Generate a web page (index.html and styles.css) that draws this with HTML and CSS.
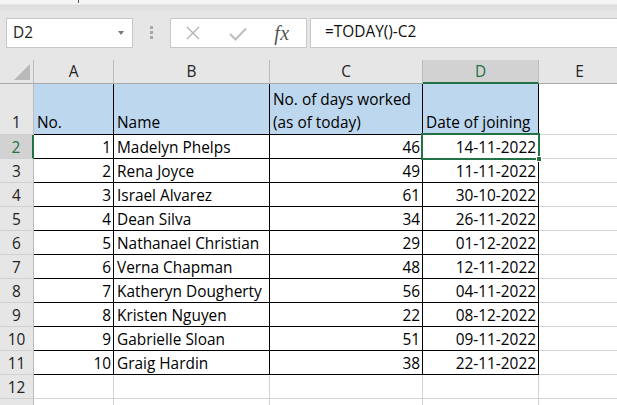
FILE: index.html
```html
<!DOCTYPE html>
<html lang="en">
<head>
  <meta charset="UTF-8">
  <title>Employees - days worked</title>
  <link rel="stylesheet" href="styles.css">
</head>
<body>

<div class="ribbon-edge"><span class="tick"></span></div>

<div class="formula-bar">
  <div class="name-box">
    <span>D2</span>
    <span class="caret"></span>
  </div>
  <div class="grip">
    <i></i><i></i><i></i>
  </div>
  <div class="fx-buttons">
    <span class="slot slot-x">
      <svg width="14" height="14" viewBox="0 0 14 14"><path d="M1 1 L13 13 M13 1 L1 13" stroke="#b4b4b4" stroke-width="1.4" fill="none"/></svg>
    </span>
    <span class="slot slot-ok">
      <svg width="18" height="14" viewBox="0 0 18 14"><path d="M1 7 L6.5 12.5 L17 1.5" stroke="#bdbdbd" stroke-width="2" fill="none"/></svg>
    </span>
    <span class="slot slot-fx">fx</span>
  </div>
  <div class="formula-input">=TODAY()-C2</div>
</div>

<div class="sheet">
  <!-- column headers -->
  <div class="corner">
    <svg width="16" height="16" viewBox="0 0 16 16"><path d="M16 0 L16 16 L0 16 Z" fill="#b9b9b9"/></svg>
  </div>
  <div class="col-head">A</div>
  <div class="col-head">B</div>
  <div class="col-head">C</div>
  <div class="col-head selected">D</div>
  <div class="col-head">E</div>

  <!-- row 1 -->
  <div class="row-head tall">1</div>
  <div class="cell tbl fill tall">No.</div>
  <div class="cell tbl fill tall">Name</div>
  <div class="cell tbl fill tall">No. of days worked<br>(as of today)</div>
  <div class="cell tbl fill tall">Date of joining</div>
  <div class="cell"></div>

  <div class="row-head selected">2</div>
  <div class="cell tbl num">1</div>
  <div class="cell tbl">Madelyn Phelps</div>
  <div class="cell tbl num">46</div>
  <div class="cell tbl num active">14-11-2022<span class="cursor"><span class="handle"></span></span></div>
  <div class="cell"></div>

  <div class="row-head">3</div>
  <div class="cell tbl num">2</div>
  <div class="cell tbl">Rena Joyce</div>
  <div class="cell tbl num">49</div>
  <div class="cell tbl num">11-11-2022</div>
  <div class="cell"></div>

  <div class="row-head">4</div>
  <div class="cell tbl num">3</div>
  <div class="cell tbl">Israel Alvarez</div>
  <div class="cell tbl num">61</div>
  <div class="cell tbl num">30-10-2022</div>
  <div class="cell"></div>

  <div class="row-head">5</div>
  <div class="cell tbl num">4</div>
  <div class="cell tbl">Dean Silva</div>
  <div class="cell tbl num">34</div>
  <div class="cell tbl num">26-11-2022</div>
  <div class="cell"></div>

  <div class="row-head">6</div>
  <div class="cell tbl num">5</div>
  <div class="cell tbl">Nathanael Christian</div>
  <div class="cell tbl num">29</div>
  <div class="cell tbl num">01-12-2022</div>
  <div class="cell"></div>

  <div class="row-head">7</div>
  <div class="cell tbl num">6</div>
  <div class="cell tbl">Verna Chapman</div>
  <div class="cell tbl num">48</div>
  <div class="cell tbl num">12-11-2022</div>
  <div class="cell"></div>

  <div class="row-head">8</div>
  <div class="cell tbl num">7</div>
  <div class="cell tbl">Katheryn Dougherty</div>
  <div class="cell tbl num">56</div>
  <div class="cell tbl num">04-11-2022</div>
  <div class="cell"></div>

  <div class="row-head">9</div>
  <div class="cell tbl num">8</div>
  <div class="cell tbl">Kristen Nguyen</div>
  <div class="cell tbl num">22</div>
  <div class="cell tbl num">08-12-2022</div>
  <div class="cell"></div>

  <div class="row-head">10</div>
  <div class="cell tbl num">9</div>
  <div class="cell tbl">Gabrielle Sloan</div>
  <div class="cell tbl num">51</div>
  <div class="cell tbl num">09-11-2022</div>
  <div class="cell"></div>

  <div class="row-head">11</div>
  <div class="cell tbl num">10</div>
  <div class="cell tbl">Graig Hardin</div>
  <div class="cell tbl num">38</div>
  <div class="cell tbl num">22-11-2022</div>
  <div class="cell"></div>

  <div class="row-head">12</div>
  <div class="cell"></div>
  <div class="cell"></div>
  <div class="cell"></div>
  <div class="cell"></div>
  <div class="cell"></div>

  <!-- row 13 only peeks in at the bottom edge -->
  <div class="row-head"></div>
  <div class="cell"></div>
  <div class="cell"></div>
  <div class="cell"></div>
  <div class="cell"></div>
  <div class="cell"></div>
</div>

</body>
</html>
```

FILE: styles.css
```css
* {
  box-sizing: border-box;
}

body {
  margin: 0;
  width: 617px;
  height: 405px;
  overflow: hidden;
  background: #e6e6e6;
  font-family: 'Open Sans', 'Liberation Sans', sans-serif;
  font-size: 15.4px;
  color: #000;
}

/* strip left over from the ribbon */
.ribbon-edge {
  position: relative;
  height: 12px;
  background: linear-gradient(#f4f4f4 0, #f4f4f4 4px, #dcdcdc 5px, #e6e6e6 12px);
}

.ribbon-edge .tick {
  position: absolute;
  left: 78px;
  top: 0;
  width: 1px;
  height: 3px;
  background: #555;
}

/* name box + formula bar */
.formula-bar {
  display: flex;
  height: 30px;
  margin-top: 6px;
  padding-left: 6px;
}

.name-box {
  width: 127px;
  height: 30px;
  display: flex;
  justify-content: space-between;
  align-items: center;
  padding: 0 8px 0 6px;
  line-height: 26px;
  background: #fff;
  border: 1px solid #c8c8c8;
  color: #222;
}

.name-box .caret {
  width: 0;
  height: 0;
  border-left: 3.5px solid transparent;
  border-right: 3.5px solid transparent;
  border-top: 4px solid #777;
  margin-top: -1px;
}

.grip {
  width: 37px;
  display: flex;
  flex-direction: column;
  align-items: center;
  padding-top: 8px;
  gap: 2px;
}

.grip i {
  display: block;
  width: 3px;
  height: 3px;
  background: #a8a8a8;
}

.fx-buttons {
  width: 137px;
  height: 30px;
  display: flex;
  align-items: center;
  background: #fff;
  border: 1px solid #c8c8c8;
}

.fx-buttons .slot {
  display: flex;
  justify-content: center;
  align-items: center;
}

.slot-x {
  width: 44px;
}

.slot-ok {
  width: 46px;
  padding-top: 2px;
}

.slot-fx {
  width: 42px;
  font-family: 'Liberation Serif', serif;
  font-style: italic;
  font-size: 20px;
  color: #555;
  letter-spacing: 0.5px;
}

.formula-input {
  flex: 1;
  height: 30px;
  margin-left: 3px;
  padding-left: 14px;
  line-height: 26px;
  background: #fff;
  border: 1px solid #c8c8c8;
  border-right: none;
  color: #111;
}

/* grid */
.sheet {
  display: grid;
  grid-template-columns: 34px 80px 156px 153px 116px 82px;
  grid-template-rows: 24px 51px;
  grid-auto-rows: 24px;
  margin-top: 12px;
}

.corner {
  background: #e6e6e6;
  border-right: 1px solid #bcbcbc;
  border-bottom: 1px solid #a9a9a9;
  display: flex;
  justify-content: flex-end;
  align-items: flex-end;
  padding: 0 3px 3px 0;
}

.col-head {
  background: #e6e6e6;
  border-right: 1px solid #bcbcbc;
  border-bottom: 1px solid #a9a9a9;
  display: flex;
  justify-content: center;
  align-items: center;
  line-height: 23px;
  color: #222;
}

.col-head.selected {
  background: #d2d2d2;
  color: #217346;
  border-bottom: 2px solid #217346;
}

.row-head {
  background: #e6e6e6;
  border-right: 1px solid #bcbcbc;
  border-bottom: 1px solid #d0d0d0;
  display: flex;
  justify-content: center;
  align-items: flex-end;
  line-height: 20px;
  color: #222;
}

.row-head.tall {
  line-height: 23px;
}

.row-head.selected {
  background: #d2d2d2;
  color: #217346;
  border-right: 2px solid #217346;
}

.cell {
  position: relative;
  background: #fff;
  border-right: 1px solid #d4d4d4;
  border-bottom: 1px solid #d4d4d4;
  display: flex;
  align-items: flex-end;
  padding: 0 2px 0 3px;
  line-height: 20px;
  white-space: nowrap;
}

.cell.tbl {
  border-color: #000;
}

.cell.fill {
  background: #bdd7ee;
}

.cell.tall {
  line-height: 23px;
}

.cell.num {
  justify-content: flex-end;
}

/* active cell cursor */
.cursor {
  position: absolute;
  z-index: 2;
  left: -2px;
  top: -2px;
  right: -2px;
  bottom: -2px;
  border: 2px solid #217346;
}

.cursor .handle {
  position: absolute;
  right: -4px;
  bottom: -4px;
  width: 6px;
  height: 6px;
  background: #217346;
  border: 1px solid #fff;
}
```
